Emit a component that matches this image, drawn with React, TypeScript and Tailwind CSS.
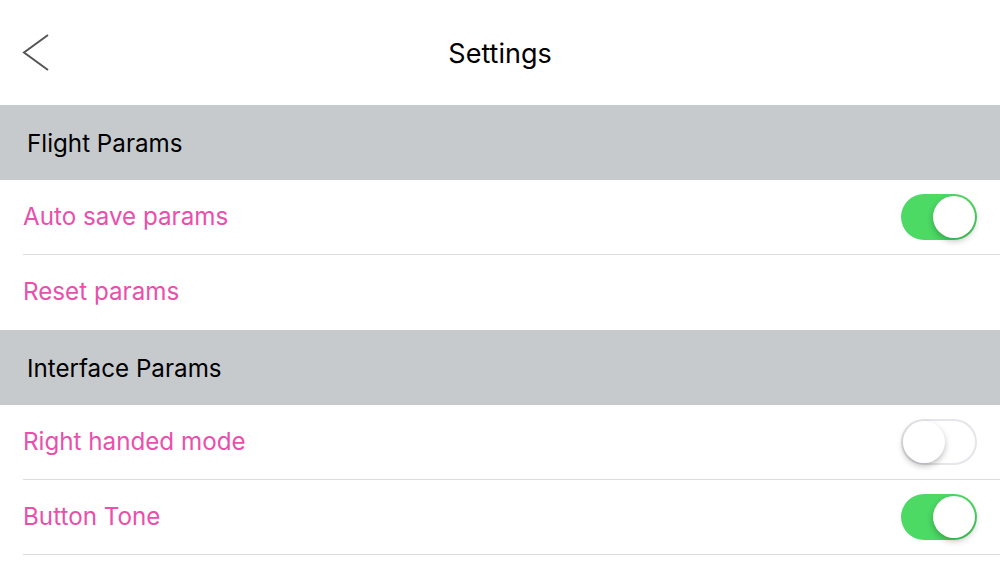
import React from "react";

function Toggle({ on }: { on: boolean }) {
  return (
    <div
      className={
        "relative h-[46px] w-[76px] rounded-full " +
        (on ? "bg-[#4cd964]" : "bg-white border-[2px] border-[#e5e5ea]")
      }
    >
      <div
        className={
          "absolute top-1/2 h-[42px] w-[42px] -translate-y-1/2 rounded-full bg-white shadow-[0_3px_6px_rgba(0,0,0,0.25)] " +
          (on ? "right-[2px]" : "left-[0px]")
        }
      />
    </div>
  );
}

function SectionHeader({ title }: { title: string }) {
  return (
    <div className="flex h-[75px] items-center bg-[#c6cacd] pl-[27px] pt-[3px] text-[24.2px] text-black">
      {title}
    </div>
  );
}

function Row({ label, toggle }: { label: string; toggle?: boolean }) {
  return (
    <div className="flex h-[75px] items-center bg-white pl-[23px]">
      <div className="flex h-full flex-1 items-center justify-between border-b border-[#dcdce0] pr-[23px]">
        <span className="text-[24.2px] text-[#e94fac]">{label}</span>
        {toggle !== undefined && <Toggle on={toggle} />}
      </div>
    </div>
  );
}

export default function App() {
  return (
    <div
      className="h-[563px] w-[1000px] overflow-hidden bg-white"
      style={{ fontFamily: "Inter, 'Noto Sans', sans-serif" }}
    >
      <div className="relative flex h-[105px] items-center justify-center bg-white pt-[3px]">
        <svg
          className="absolute left-[22px] top-[33px]"
          width="28"
          height="40"
          viewBox="0 0 28 40"
          fill="none"
        >
          <path d="M26 2 L2 19.5 L26 37" stroke="#555" strokeWidth="2" />
        </svg>
        <span className="text-[27px] text-black">Settings</span>
      </div>
      <SectionHeader title="Flight Params" />
      <Row label="Auto save params" toggle={true} />
      <div className="flex h-[75px] items-center bg-white pl-[23px] text-[24.2px] text-[#e94fac]">
        Reset params
      </div>
      <SectionHeader title="Interface Params" />
      <Row label="Right handed mode" toggle={false} />
      <Row label="Button Tone" toggle={true} />
    </div>
  );
}
